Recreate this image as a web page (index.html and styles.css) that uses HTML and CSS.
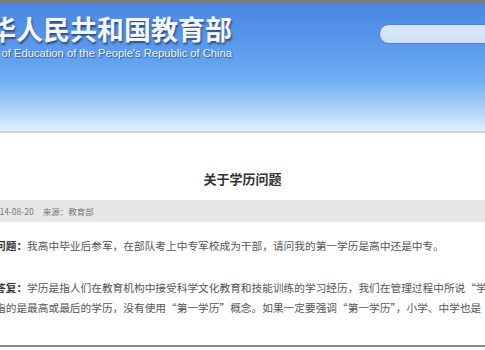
FILE: index.html
```html
<!DOCTYPE html>
<html lang="zh-CN">
<head>
    <meta charset="UTF-8">
    <meta name="viewport" content="width=device-width, initial-scale=1.0">
    <title>关于学历问题</title>
    <link rel="stylesheet" href="styles.css">
</head>
<body>

    <!-- Site banner -->
    <header class="banner">
        <div class="logo">
            <div class="logo-cn">中华人民共和国教育部</div>
            <div class="logo-en">Ministry of Education of the People's Republic of China</div>
        </div>
        <div class="search"></div>
    </header>

    <!-- Article -->
    <main class="article">
        <h1 class="article-title">关于学历问题</h1>
        <div class="meta"><span>2014-08-20</span><span>来源：教育部</span></div>

        <p class="qa"><b>问题：</b>我高中毕业后参军，在部队考上中专军校成为干部，请问我的第一学历是高中还是中专。</p>

        <p class="qa"><b>答复：</b>学历是指人们在教育机构中接受科学文化教育和技能训练的学习经历，我们在管理过程中所说“学<br>指的是最高或最后的学历，没有使用“第一学历”概念。如果一定要强调“第一学历”，小学、中学也是</p>
    </main>

</body>
</html>
```

FILE: styles.css
```css
html, body {
    margin: 0;
    padding: 0;
    background-color: #ffffff;
    overflow: hidden;
}

body {
    width: 485px;
    height: 350px;
    font-family: "Noto Sans CJK SC", "Liberation Sans", sans-serif;
    color: #555;
}

.banner {
    display: flex;
    align-items: flex-start;
    height: 128px;
    border-top: 3px solid #7c7c7c;
    border-bottom: 2px solid #cdd2d6;
    background: linear-gradient(to bottom, #4a86e4 0%, #5b9aec 35%, #6eaef1 60%, #a9d0f6 82%, #e2f1fd 100%);
    overflow: hidden;
}

/* the window cuts off the left part of the logo */
.logo {
    flex-shrink: 0;
    width: 280px;
    margin-left: -48px;
    margin-top: 9px;
    text-align: right;
}

.logo-cn {
    display: inline-block;
    font-size: 27px;
    line-height: 33px;
    font-weight: bold;
    color: #f3f6fa;
    white-space: nowrap;
    text-shadow: 1px 2px 2px rgba(30, 50, 90, 0.75);
}

.logo-en {
    font-family: "Liberation Sans", Arial, sans-serif;
    font-size: 11.2px;
    line-height: 13px;
    margin-top: 2px;
    color: #f3f6fa;
    white-space: nowrap;
    text-shadow: 1px 1px 1px rgba(30, 50, 90, 0.7);
}

.search {
    flex-shrink: 0;
    width: 120px;
    height: 18px;
    margin-top: 21px;
    margin-left: auto;
    margin-right: -16px;
    border: 1px solid #5a7ed6;
    border-radius: 10px;
    background: linear-gradient(to bottom, #dae8fb, #cfe0f8);
}

.article {
    height: 175px;
    padding-top: 37px;
    border-bottom: 2px solid #8a8a8a;
}

.article-title {
    margin: 0;
    font-size: 13px;
    line-height: 18px;
    font-weight: bold;
    color: #333;
    text-align: center;
}

.meta {
    display: flex;
    gap: 9px;
    margin-top: 12px;
    height: 22px;
    line-height: 22px;
    padding-left: 0;
    background-color: #e7e7e7;
    font-size: 8.5px;
    color: #777;
    white-space: nowrap;
}

.meta span:first-child {
    margin-left: -10px;
}

.qa {
    margin: 14px 0 0 -5px;
    font-size: 10.7px;
    line-height: 20px;
    white-space: nowrap;
    color: #555;
}

.qa + .qa {
    margin-top: 22px;
}

.qa b {
    color: #333;
}
```
